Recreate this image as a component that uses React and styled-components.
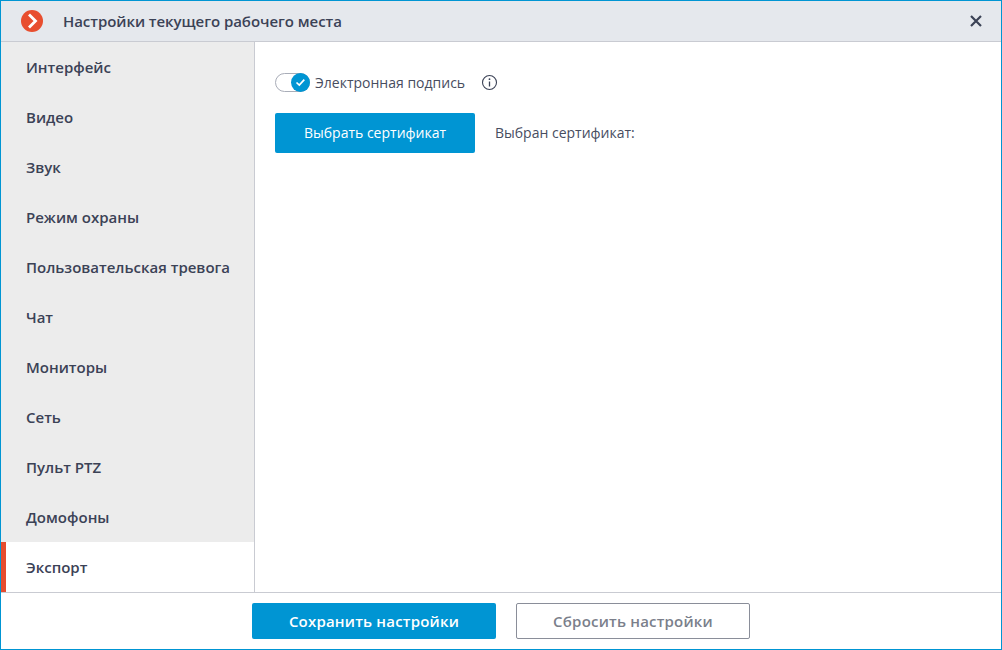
import React from 'react';
import styled, { createGlobalStyle } from 'styled-components';

const Global = createGlobalStyle`
  html, body { margin: 0; padding: 0; background: #fff; }
  * { box-sizing: border-box; }
`;
const Win = styled.div`
  width: 1002px; height: 650px; border: 1px solid #0095d3;
  display: flex; flex-direction: column; background: #fff;
  font-family: "Open Sans", "Liberation Sans", sans-serif; color: #3b4256; overflow: hidden;
`;
const Header = styled.header`
  height: 41px; flex: none; background: #e5e8ed; border-bottom: 1px solid #c9cbd2;
  display: flex; align-items: center; padding: 0 19px 0 20px;
`;
const Logo = styled.svg`width: 22px; height: 22px; flex: none;`;
const Title = styled.h1`
  margin: 0 0 0 20px; flex: 1; font-size: 15px; font-weight: 600; line-height: 20px; letter-spacing: -0.05px;
`;
const Close = styled.svg`width: 12px; height: 12px; flex: none;`;
const Body = styled.div`flex: 1; display: flex; min-height: 0;`;
const Side = styled.nav`
  width: 254px; flex: none; background: #ececec; border-right: 1px solid #c9cbd2;
  display: flex; flex-direction: column;
`;
const Item = styled.div`
  height: 50px; flex: none; display: flex; align-items: center; padding-bottom: 1px;
  font-size: 15px; font-weight: 600;
  background: ${p => p.$active ? '#fff' : 'transparent'};
  border-left: ${p => p.$active ? '5px solid #e64c2e' : '0'};
  padding-left: ${p => p.$active ? '20px' : '25px'};
`;
const Main = styled.main`flex: 1; padding: 28px 20px 0; display: flex; flex-direction: column;`;
const ToggleRow = styled.div`display: flex; align-items: center; height: 24px; font-size: 14px; color: #474d5f;`;
const Toggle = styled.div`
  position: relative; width: 35px; height: 19px; border: 1px solid #a9adb8; border-radius: 10px; background: #fff; margin-right: 5px;
`;
const Knob = styled.div`
  position: absolute; right: -1px; top: -1px; width: 19px; height: 19px; border-radius: 50%; background: #0095d3;
  display: flex; align-items: center; justify-content: center;
`;
const Info = styled.svg`width: 17px; height: 17px; margin-left: 16px;`;
const CertRow = styled.div`display: flex; align-items: center; margin-top: 19px; font-size: 14px; color: #474d5f;`;
const Primary = styled.button`
  border: 0; border-radius: 2px; background: #0095d3; color: #fff; font: inherit; cursor: pointer;
  width: 200px; height: 40px; padding: 0 0 1px; font-size: 14px;
`;
const CertLabel = styled.span`margin-left: 20px; padding-bottom: 2px;`;
const Footer = styled.footer`
  height: 57px; flex: none; border-top: 1px solid #c9cbd2; display: flex; justify-content: center; align-items: center; gap: 20px; padding: 0 1px 0 0;
`;
const Save = styled.button`
  width: 244px; height: 36px; border: 0; border-radius: 2px; background: #0095d3; color: #fff;
  font: 600 15px "Open Sans", sans-serif; letter-spacing: 0.2px; padding: 0 0 0 1px;
`;
const Reset = styled.button`
  width: 234px; height: 36px; border: 1px solid #8a8e99; border-radius: 2px; background: #fff; color: #7b7f8b;
  font: 600 15px "Open Sans", sans-serif; letter-spacing: 0.2px; padding: 0 0 0 1px;
`;
const items = ['Интерфейс','Видео','Звук','Режим охраны','Пользовательская тревога','Чат','Мониторы','Сеть','Пульт PTZ','Домофоны'];
export default function App() {
  return (
    <Win>
      <Global />
      <Header>
        <Logo viewBox="0 0 22 22"><circle cx="11" cy="11" r="11" fill="#e84e2f"/><path d="M8 4.5l6.5 6.5L8 17.5" fill="none" stroke="#fff" strokeWidth="2.8"/></Logo>
        <Title>Настройки текущего рабочего места</Title>
        <Close viewBox="0 0 12 12"><path d="M1 1l10 10M11 1L1 11" stroke="#3b4256" strokeWidth="2.2"/></Close>
      </Header>
      <Body>
        <Side>
          {items.map(t => <Item key={t}>{t}</Item>)}
          <Item $active>Экспорт</Item>
        </Side>
        <Main>
          <ToggleRow>
            <Toggle>
              <Knob><svg width="11" height="9" viewBox="0 0 11 9"><path d="M1.5 4.5l2.8 2.6 5-5.5" fill="none" stroke="#fff" strokeWidth="1.7"/></svg></Knob>
            </Toggle>
            Электронная подпись
            <Info viewBox="0 0 17 17"><circle cx="8.5" cy="8.5" r="7" fill="none" stroke="#3b4256" strokeWidth="1.1"/><path d="M8.5 7.5v5" stroke="#3b4256" strokeWidth="1.3"/><circle cx="8.5" cy="5.2" r=".9" fill="#3b4256"/></Info>
          </ToggleRow>
          <CertRow>
            <Primary>Выбрать сертификат</Primary>
            <CertLabel>Выбран сертификат:</CertLabel>
          </CertRow>
        </Main>
      </Body>
      <Footer>
        <Save>Сохранить настройки</Save>
        <Reset>Сбросить настройки</Reset>
      </Footer>
    </Win>
  );
}
